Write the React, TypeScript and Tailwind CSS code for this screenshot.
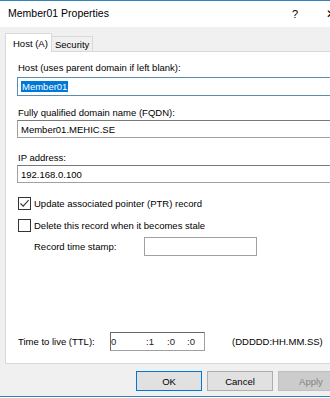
import React from "react";

const font = { fontFamily: '"Liberation Sans", Arial, sans-serif' };

function Check({ checked }: { checked?: boolean }) {
  return (
    <div className="w-[13px] h-[13px] border border-[#333333] bg-white flex items-center justify-center shrink-0">
      {checked && (
        <svg width="11" height="11" viewBox="0 0 11 11">
          <path d="M1.5 5.5 L4.2 8.2 L9.6 2.2" fill="none" stroke="#333333" strokeWidth="1.1" />
        </svg>
      )}
    </div>
  );
}

export default function App() {
  return (
    <div className="w-[330px] h-[398px] overflow-hidden bg-white text-black" style={font}>
      <div className="w-[352px] flex flex-col">
        <div className="h-px bg-[#2f83bf]" />
        <div className="h-[26px] bg-white flex items-center pl-[8px] text-[10.5px]">
          <span>Member01 Properties</span>
          <span className="ml-auto text-[11px] w-[10px] text-center">?</span>
          <span className="ml-[26px] mr-[16px] text-[12px] leading-none">✕</span>
        </div>
        <div className="bg-[#f0f0f0] flex flex-col pt-[6px] text-[9.5px] leading-[11px]">
          <div className="flex items-end pl-[5px] h-[18px]">
            <div className="relative z-10 h-[19px] w-[47px] bg-white border border-b-0 border-[#d9d9d9] pl-[7px] pt-[4px] -mb-px">
              Host (A)
            </div>
            <div className="h-[15px] w-[41px] border border-l-0 border-b-0 border-[#d9d9d9] pl-[3px] pt-[2px]">
              Security
            </div>
          </div>
          <div className="ml-[5px] h-[313px] border border-[#d9d9d9] bg-white flex flex-col pl-[11px]">
            <div className="mt-[10px] pl-px h-[11px]">Host (uses parent domain if left blank):</div>
            <div className="mt-[4px] h-[19px] border border-[#5b8db3] flex items-center pl-[3px]">
              <span className="bg-[#0078d7] text-white px-px leading-[11px]">Member01</span>
            </div>
            <div className="mt-[11px] pl-px h-[11px]">Fully qualified domain name (FQDN):</div>
            <div className="mt-[2px] h-[18px] border border-[#a0a0a0] border-t-[#7a7a7a] flex items-center pl-[3px]">
              Member01.MEHIC.SE
            </div>
            <div className="mt-[14px] pl-px h-[11px]">IP address:</div>
            <div className="mt-[2px] h-[18px] border border-[#a0a0a0] border-t-[#7a7a7a] flex items-center pl-[3px]">
              192.168.0.100
            </div>
            <div className="mt-[14px] h-[13px] flex items-center pl-px">
              <Check checked />
              <span className="ml-[3px]">Update associated pointer (PTR) record</span>
            </div>
            <div className="mt-[9px] h-[13px] flex items-center pl-px">
              <Check />
              <span className="ml-[3px]">Delete this record when it becomes stale</span>
            </div>
            <div className="mt-[5px] h-[19px] flex items-center pl-[17px]">
              <span className="w-[110px]">Record time stamp:</span>
              <div className="w-[113px] h-[19px] border border-[#a0a0a0] bg-white" />
            </div>
            <div className="mt-[76px] h-[19px] flex items-center pl-px">
              <span className="w-[92px]">Time to live (TTL):</span>
              <div className="w-[95px] h-[19px] border border-[#a0a0a0] border-t-[#696969] border-l-[#696969] flex items-center text-[#222]">
                <span className="w-[35px]">0</span>
                <span className="w-[21px]">:1</span>
                <span className="w-[20px]">:0</span>
                <span>:0</span>
              </div>
              <span className="ml-[27px]">(DDDDD:HH.MM.SS)</span>
            </div>
          </div>
          <div className="mt-[7px] h-[20px] flex pl-[136px] gap-[5px]">
            <div className="w-[66px] h-[20px] border border-[#0078d7] bg-[#e1e1e1] flex items-center justify-center">OK</div>
            <div className="w-[66px] h-[20px] border border-[#adadad] bg-[#e1e1e1] flex items-center justify-center">Cancel</div>
            <div className="w-[66px] h-[20px] border border-[#bfbfbf] bg-[#cccccc] text-[#838383] flex items-center justify-center">Apply</div>
          </div>
          <div className="h-[5px]" />
        </div>
        <div className="h-px bg-[#2f83bf]" />
        <div className="h-[2px] bg-white" />
      </div>
    </div>
  );
}
